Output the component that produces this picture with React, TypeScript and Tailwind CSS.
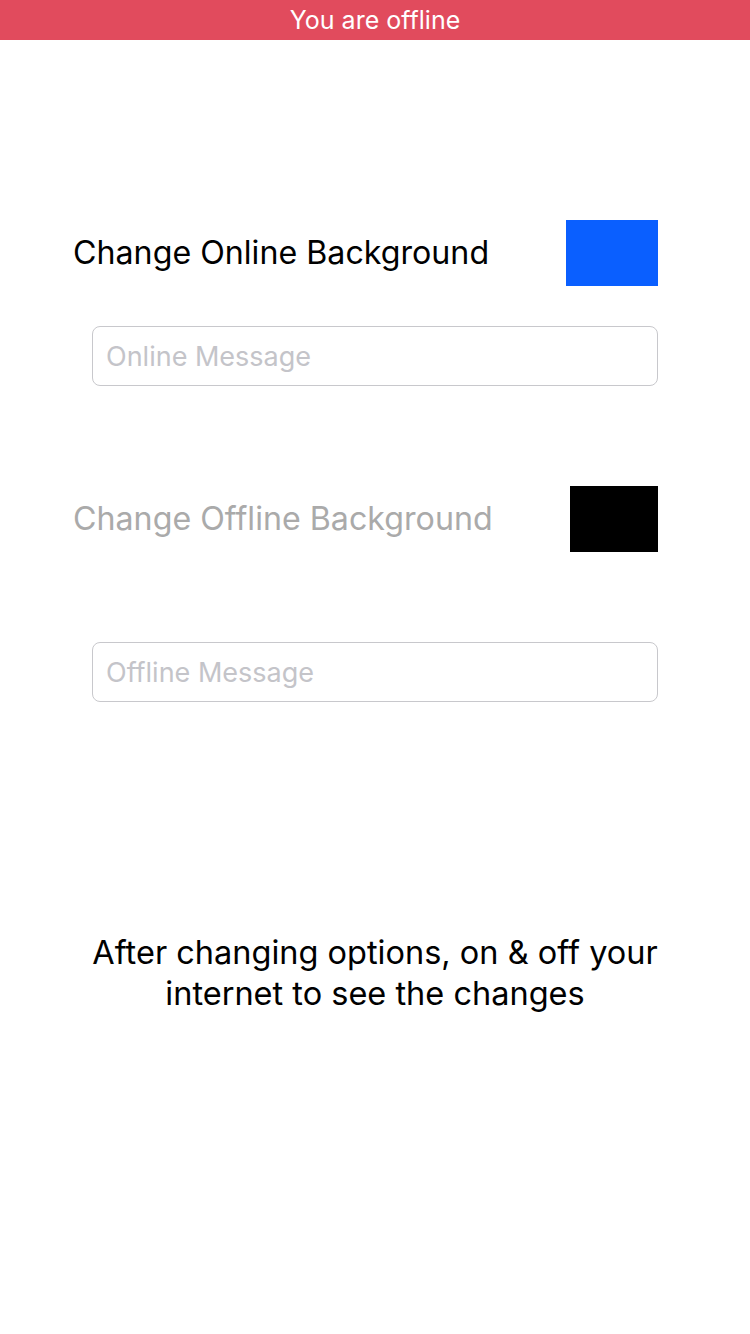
const fontStack = { fontFamily: '"Inter", "Roboto", "Liberation Sans", sans-serif' };

const ColorRow = ({ label, swatch, muted }: { label: string; swatch: string; muted?: boolean }) => (
  <div className="flex items-center justify-between pl-[73px] pr-[92px]">
    <span className={`text-[32.2px] ${muted ? "text-[#aaaaaa]" : "text-black"}`}>{label}</span>
    <div className={`h-[66px] ${swatch}`} />
  </div>
);

const MessageInput = ({ placeholder }: { placeholder: string }) => (
  <div className="pl-[92px] pr-[92px]">
    <input
      placeholder={placeholder}
      className="h-[60px] w-full rounded-[8px] border border-[#c8c8cc] px-[13px] text-[27px] outline-none placeholder:text-[#c4c4c9]"
      style={fontStack}
    />
  </div>
);

export default function App() {
  return (
    <div className="min-h-[1334px] w-[750px] bg-white" style={fontStack}>
      {/* offline banner */}
      <div className="flex h-[40px] items-center justify-center bg-[#e14b5d]">
        <span className="pt-[2px] text-[25px] text-white">You are offline</span>
      </div>

      <div className="pt-[180px]">
        <ColorRow label="Change Online Background" swatch="w-[92px] bg-[#0a5fff]" />
        <div className="h-[40px]" />
        <MessageInput placeholder="Online Message" />
        <div className="h-[100px]" />
        <ColorRow label="Change Offline Background" swatch="w-[88px] bg-black" muted />
        <div className="h-[90px]" />
        <MessageInput placeholder="Offline Message" />
      </div>

      <p className="mx-auto mt-[230px] w-[620px] text-center text-[32.5px] leading-[41px] text-black">
        After changing options, on &amp; off your internet to see the changes
      </p>
    </div>
  );
}
